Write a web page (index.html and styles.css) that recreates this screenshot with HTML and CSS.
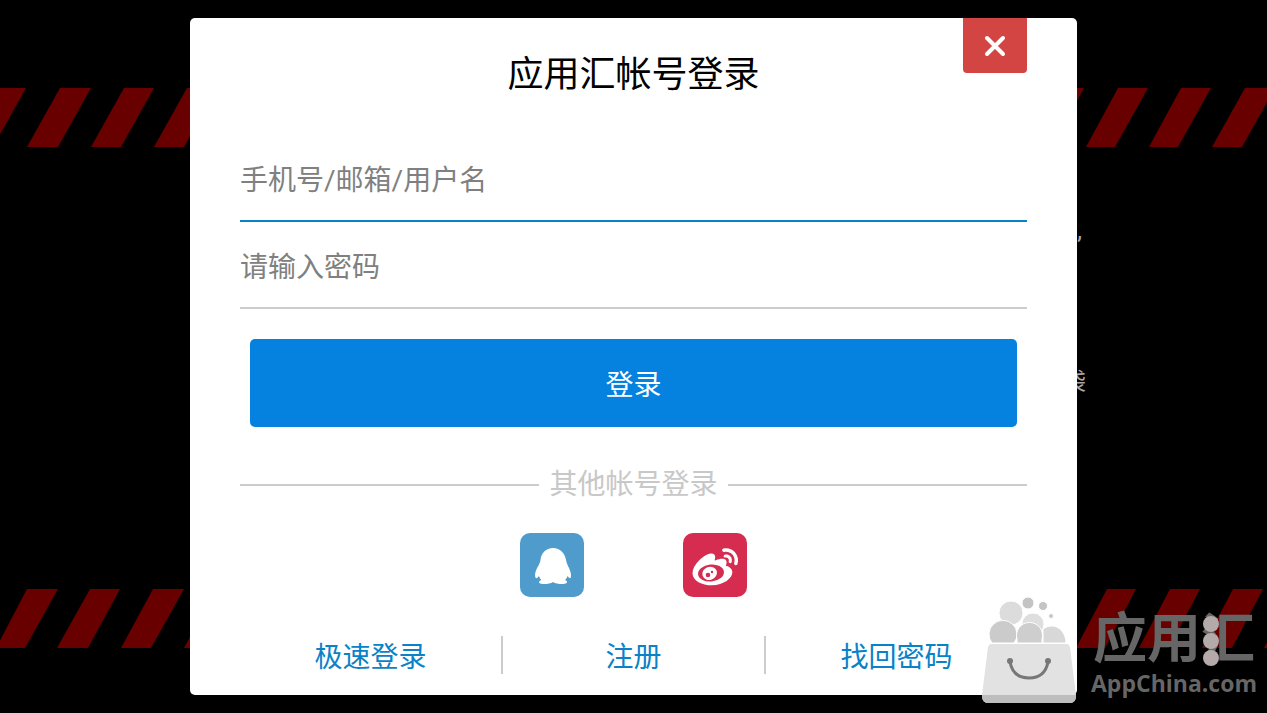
FILE: index.html
```html
<!DOCTYPE html>
<html lang="zh-CN">
<head>
    <meta charset="UTF-8">
    <meta name="viewport" content="width=device-width, initial-scale=1.0">
    <title>应用汇帐号登录</title>
    <link rel="stylesheet" href="styles.css">
</head>
<body>
    <!-- Page behind the dialog -->
    <div class="backdrop">
        <div class="tape tape-top">
            <svg width="190" height="59" viewBox="0 0 190 59" aria-hidden="true">
                <path d="M-4 0h30l-33 59h-30zM60 0h31l-33 59h-31zM124 0h30l-33 59h-30zM187 0h30l-33 59h-30z"/>
            </svg>
            <svg width="200" height="59" viewBox="0 0 200 59" aria-hidden="true">
                <path d="M-12 0h29l-32 59h-29zM51 0h30l-33 59h-29zM114 0h30l-33 59h-29zM178 0h30l-33 59h-30z"/>
            </svg>
        </div>
        <div class="tape tape-bottom">
            <svg width="190" height="59" viewBox="0 0 190 59" aria-hidden="true">
                <path d="M27 0h31l-33 59h-29zM90 0h30l-32 59h-31zM153 0h31l-33 59h-30zM216 0h30l-32 59h-30z"/>
            </svg>
            <svg width="200" height="59" viewBox="0 0 200 59" aria-hidden="true">
                <path d="M40 0h29l-31 59h-29zM103 0h30l-31 59h-30zM166 0h30l-31 59h-30zM228 0h30l-31 59h-30z"/>
            </svg>
        </div>
        <span class="hint hint-first">,</span>
        <span class="hint hint-second">袋</span>
    </div>

    <main class="dialog">
        <button type="button" class="close-btn" aria-label="关闭">
            <svg width="24" height="24" viewBox="0 0 24 24">
                <path d="M4 4l16 16M20 4L4 20"/>
            </svg>
        </button>
        <h1>应用汇帐号登录</h1>

        <form id="loginForm">
            <input type="text" class="field active" name="username" aria-label="手机号/邮箱/用户名" placeholder="手机号/邮箱/用户名">
            <input type="password" class="field" name="password" aria-label="请输入密码" placeholder="请输入密码">
            <button type="submit" class="login-btn">登录</button>
        </form>

        <div class="divider">其他帐号登录</div>

        <div class="social">
            <a href="#qq" class="social-link qq" aria-label="QQ">
                <svg width="64" height="64" viewBox="0 0 64 64">
                    <path d="M33 15C26 15 21 20 20.500 27C20 31 17 34 15.500 39C14.500 43 15.500 46 17 45C18 44.500 18.500 43.500 19 43C19.500 45 20.500 46 21.500 47C18 48 18 51 23 51C28 51 31 50.500 33 49C35 50.500 38 51 43 51C48 51 48 48 45 47C46 46 47 45 47.500 43C48 43.500 48.500 44.500 49.500 45C51 46 51.500 43 50.500 39C49 34 46.500 31 46 27C45 20 40 15 33 15Z"/>
                </svg>
            </a>
            <a href="#weibo" class="social-link weibo" aria-label="微博">
                <svg width="64" height="64" viewBox="0 0 64 64">
                    <g transform="translate(9.500 11) scale(1.900)">
                        <path d="M18.059 11.649c-.346-.105-.57-.18-.405-.615.375-.977.42-1.804 0-2.404-.781-1.112-2.915-1.053-5.364-.03 0 0-.766.331-.571-.271.376-1.217.315-2.224-.27-2.809-1.338-1.337-4.869.045-7.888 3.08C1.309 10.87 0 13.273 0 15.348c0 3.981 5.099 6.395 10.086 6.395 6.536 0 10.888-3.801 10.888-6.82 0-1.822-1.547-2.854-2.915-3.284z"/>
                        <path d="M19.967 6.557c-.766-.856-1.908-1.187-2.96-.962-.436.09-.706.511-.616.932.09.42.511.691.932.602.511-.105 1.067.044 1.442.465.376.421.466.977.316 1.473-.136.406.089.856.51.992.405.119.857-.105.992-.512.33-1.021.12-2.178-.646-3.035z"/>
                        <path d="M22.385 4.362c-1.576-1.757-3.905-2.419-6.054-1.968-.496.104-.812.587-.706 1.081.104.496.586.813 1.082.707 1.532-.331 3.185.15 4.296 1.383 1.112 1.246 1.429 2.943.947 4.416-.165.480.106 1.007.586 1.157.479.165.991-.104 1.157-.586.675-2.088.241-4.478-1.338-6.235z"/>
                    </g>
                    <ellipse class="eye" cx="28" cy="40" rx="13" ry="8.500" transform="rotate(-6 28 40)"/>
                    <ellipse cx="26.500" cy="40.500" rx="7.500" ry="6.500" transform="rotate(-20 26 40)"/>
                    <circle class="eye" cx="25" cy="42" r="2.300"/>
                    <circle class="eye" cx="29" cy="39" r="1.200"/>
                </svg>
            </a>
        </div>

        <nav class="links">
            <a href="#quick">极速登录</a>
            <a href="#register">注册</a>
            <a href="#forgot">找回密码</a>
        </nav>
    </main>

    <div class="watermark">
        <svg class="bag" width="95" height="106" viewBox="0 0 95 106" aria-hidden="true">
            <g stroke="#fff" stroke-width="1">
                <circle cx="29" cy="16" r="12" fill="#dcdcdc"/>
                <circle cx="46" cy="6" r="6" fill="#c4c4c4"/>
                <circle cx="61" cy="9" r="4.500" fill="#c4c4c4"/>
                <circle cx="69" cy="19" r="2.500" fill="#c8c8c8"/>
                <circle cx="51" cy="27" r="11" fill="#dedede"/>
                <path d="M10 46A14 14 0 1 1 32 46Z" fill="#cbcbcb"/>
                <path d="M35 46V42A13 13 0 1 1 60 42V46Z" fill="#cecece"/>
                <path d="M61 46V32C72 24 84 33 84 46Z" fill="#d8d8d8"/>
            </g>
            <path d="M9 47H85Q87 47 88 50L94 98Q94 106 88 106H6Q0 106 0 98L6 50Q7 47 9 47Z" fill="#e2e2e2"/>
            <path d="M0 98H94Q94 106 88 106H6Q0 106 0 98Z" fill="#bdbdbd"/>
            <path d="M28 65Q31 81 47 81Q63 81 66 65" fill="none" stroke="#777" stroke-width="3"/>
            <circle cx="28" cy="64" r="3" fill="#777"/>
            <circle cx="66" cy="64" r="3" fill="#777"/>
        </svg>
        <div class="brand">
            <span class="brand-name">应用汇</span>
            <span class="brand-url">AppChina.com</span>
            <svg class="brand-dots" width="18" height="52" viewBox="0 0 18 52" aria-hidden="true">
                <circle cx="9" cy="9" r="8"/>
                <circle cx="9" cy="26" r="8"/>
                <circle cx="9" cy="43" r="8"/>
            </svg>
        </div>
    </div>
</body>
</html>
```
FILE: styles.css
```css
* {
    margin: 0;
    padding: 0;
    box-sizing: border-box;
}

body {
    font-family: Roboto, 'Noto Sans CJK SC', sans-serif;
    font-size: 28px;
    background: #000;
    min-height: 100vh;
    display: flex;
    align-items: center;
    justify-content: center;
    position: relative;
    overflow: hidden;
}

button, input {
    font: inherit;
    border: none;
}

a {
    text-decoration: none;
}

/* Backdrop */
.backdrop {
    position: absolute;
    inset: 0;
}

.tape {
    position: absolute;
    left: 0;
    right: 0;
    display: flex;
    justify-content: space-between;
    fill: #690000;
}

.tape-top {
    top: 88px;
}

.tape-bottom {
    bottom: 65px;
}

.hint {
    position: absolute;
    color: #aaa;
    font-size: 24px;
    line-height: 32px;
}

.hint-first {
    top: 215px;
    right: 185px;
}

.hint-second {
    top: 366px;
    right: 181px;
}

/* Dialog */
.dialog {
    position: relative;
    width: 70%;
    padding: 0 50px 21px;
    background: #fff;
    border-radius: 5px;
}

h1 {
    font-size: 36px;
    font-weight: 400;
    line-height: 114px;
    text-align: center;
    color: #000;
    margin-bottom: 8px;
}

.close-btn {
    position: absolute;
    top: 0;
    right: 50px;
    width: 64px;
    height: 55px;
    display: flex;
    align-items: center;
    justify-content: center;
    background: #d34542;
    border-radius: 0 0 4px 4px;
    cursor: pointer;
}

.close-btn svg {
    stroke: #fff;
    stroke-width: 4;
    stroke-linecap: round;
}

form {
    display: flex;
    flex-direction: column;
}

.field {
    width: 100%;
    height: 82px;
    margin-bottom: 5px;
    background: none;
    border-bottom: 2px solid #ccc;
    color: #333;
    outline: none;
}

.field.active,
.field:focus {
    border-bottom-color: #0a82c8;
}

.field::placeholder {
    color: #808080;
}

.login-btn {
    height: 88px;
    margin: 25px 10px 0;
    background: #0582df;
    color: #fff;
    border-radius: 5px;
    cursor: pointer;
}

.divider {
    display: flex;
    align-items: center;
    gap: 10px;
    margin-top: 38px;
    line-height: 40px;
    color: #c8c8c8;
}

.divider::before,
.divider::after {
    content: '';
    flex: 1;
    height: 2px;
    background: #ccc;
}

.social {
    display: flex;
    justify-content: center;
    gap: 99px;
    margin-top: 28px;
}

.social-link {
    width: 64px;
    height: 64px;
    border-radius: 10px;
    fill: #fff;
}

.qq {
    background: #4f9bcb;
}

.weibo {
    background: #d52c50;
}

.weibo .eye {
    fill: #d52c50;
}

.links {
    display: flex;
    margin-top: 39px;
}

.links a {
    flex: 1;
    padding-top: 6px;
    line-height: 32px;
    text-align: center;
    color: #0a82c8;
}

.links a + a {
    border-left: 2px solid #ccc;
}

/* Watermark */
.watermark {
    position: absolute;
    right: 10px;
    bottom: 10px;
    display: flex;
    gap: 14px;
}

.brand {
    position: relative;
    display: flex;
    flex-direction: column;
    align-items: center;
    padding-top: 16px;
    color: #666;
}

.brand-name {
    font-size: 54px;
    font-weight: 700;
    line-height: 54px;
}

.brand-url {
    font-family: 'Open Sans', sans-serif;
    font-size: 23px;
    font-weight: 700;
    line-height: 32px;
}

.brand-dots {
    position: absolute;
    top: 18px;
    left: 111px;
    fill: #b5aaaa;
}
```
